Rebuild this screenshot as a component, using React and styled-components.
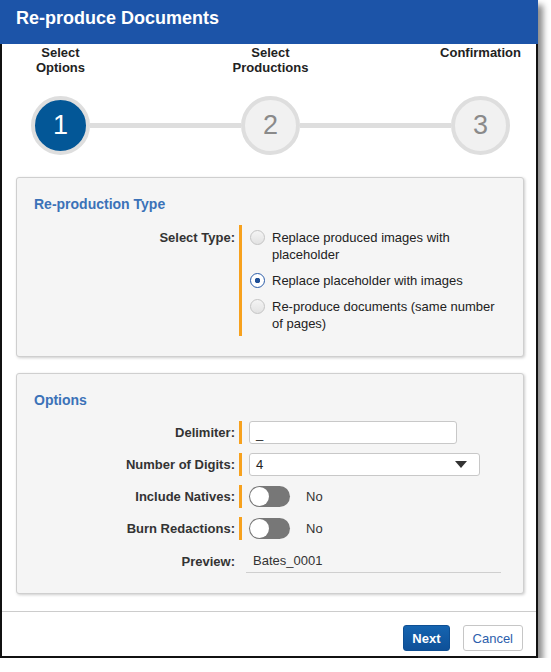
import React from "react";
import styled, { createGlobalStyle } from "styled-components";

const GlobalStyle = createGlobalStyle`
  body {
    margin: 0;
    background: #ffffff;
    font-family: "Liberation Sans", Arial, sans-serif;
  }
`;

const steps = [
  { num: 1, label: ["Select", "Options"], active: true },
  { num: 2, label: ["Select", "Productions"] },
  { num: 3, label: ["Confirmation"] },
];

const radios = [
  { text: "Replace produced images with placeholder" },
  { text: "Replace placeholder with images", checked: true },
  { text: "Re-produce documents (same number of pages)" },
];

const App = () => {
  return (
    <>
      <GlobalStyle />
      <Dialog>
        <Header>Re-produce Documents</Header>

        {/* wizard steps */}
        <Steps>
          {steps.map((s) => (
            <StepLabel key={"l" + s.num} $col={s.num * 2 - 1}>
              {s.label.map((line) => (
                <div key={line}>{line}</div>
              ))}
            </StepLabel>
          ))}
          {steps.map((s, i) => (
            <React.Fragment key={"c" + s.num}>
              <Circle $col={s.num * 2 - 1} $active={s.active}>
                {s.num}
              </Circle>
              {i < steps.length - 1 && <Connector $col={s.num * 2} />}
            </React.Fragment>
          ))}
        </Steps>

        <Body>
          <Card>
            <CardTitle>Re-production Type</CardTitle>
            <FieldRow>
              <Label $top>Select Type:</Label>
              <RadioGroup>
                {radios.map((r) => (
                  <RadioOption key={r.text}>
                    <RadioDot $checked={r.checked} />
                    <RadioText>{r.text}</RadioText>
                  </RadioOption>
                ))}
              </RadioGroup>
            </FieldRow>
          </Card>

          <Card>
            <CardTitle>Options</CardTitle>
            <Rows>
              <FieldRow>
                <Label>Delimiter:</Label>
                <Control $required>
                  <TextInput $w={208}>_</TextInput>
                </Control>
              </FieldRow>
              <FieldRow>
                <Label>Number of Digits:</Label>
                <Control $required>
                  <SelectBox $w={231}>
                    4
                    <svg width="12" height="7" viewBox="0 0 12 7">
                      <path d="M0 0 L12 0 L6 7 Z" fill="#333" />
                    </svg>
                  </SelectBox>
                </Control>
              </FieldRow>
              <FieldRow>
                <Label>Include Natives:</Label>
                <Control $required>
                  <Toggle />
                  <ToggleText>No</ToggleText>
                </Control>
              </FieldRow>
              <FieldRow>
                <Label>Burn Redactions:</Label>
                <Control $required>
                  <Toggle />
                  <ToggleText>No</ToggleText>
                </Control>
              </FieldRow>
              <FieldRow>
                <Label>Preview:</Label>
                <Control>
                  <Preview>Bates_0001</Preview>
                </Control>
              </FieldRow>
            </Rows>
          </Card>
        </Body>

        <Footer>
          <PrimaryButton>Next</PrimaryButton>
          <SecondaryButton>Cancel</SecondaryButton>
        </Footer>
      </Dialog>
    </>
  );
};

export default App;

const Dialog = styled.div`
  width: 538px;
  height: 658px;
  box-sizing: border-box;
  border: 2px solid #111;
  border-top: none;
  background: #fff;
  box-shadow: 5px 5px 6px rgba(0, 0, 0, 0.45);
  display: flex;
  flex-direction: column;
`;

const Header = styled.div`
  height: 45px;
  margin: 0 -2px;
  padding: 0 16px;
  background-color: #1c54a8;
  color: #fff;
  font-size: 18px;
  font-weight: bold;
  line-height: 36px;
`;

const Steps = styled.div`
  display: grid;
  grid-template-columns: 59px 1fr 59px 1fr 59px;
  grid-template-rows: 52px 59px;
  padding: 0 26px 0 29px;
  align-items: center;
`;

const StepLabel = styled.div`
  grid-column: ${(p) => p.$col};
  grid-row: 1;
  align-self: start;
  justify-self: center;
  white-space: nowrap;
  text-align: center;
  font-size: 13px;
  font-weight: bold;
  line-height: 15px;
  color: #222;
  padding-top: 1px;
`;

const Circle = styled.div`
  grid-column: ${(p) => p.$col};
  grid-row: 2;
  width: 59px;
  height: 59px;
  box-sizing: border-box;
  border-radius: 50%;
  border: 4px solid #dedede;
  background-color: ${(p) => (p.$active ? "#035797" : "#f1f1f1")};
  color: ${(p) => (p.$active ? "#fff" : "#8a8a8a")};
  display: flex;
  align-items: center;
  justify-content: center;
  font-size: 27px;
`;

const Connector = styled.div`
  grid-column: ${(p) => p.$col};
  grid-row: 2;
  height: 5px;
  background-color: #dedede;
`;

const Body = styled.div`
  flex: 1;
  display: flex;
  flex-direction: column;
  gap: 16px;
  padding: 22px 12px 0 14px;
`;

const Card = styled.div`
  background-color: #f5f5f5;
  border: 1px solid #cfcfcf;
  border-radius: 3px;
  box-shadow: 1px 1px 3px rgba(0, 0, 0, 0.2);
  padding: 18px 17px 20px 17px;
`;

const CardTitle = styled.div`
  color: #3b72b8;
  font-size: 14px;
  font-weight: bold;
  line-height: 16px;
  margin-bottom: 13px;
`;

const Rows = styled.div`
  display: flex;
  flex-direction: column;
  gap: 9px;
`;

const FieldRow = styled.div`
  display: flex;
  align-items: stretch;
`;

const Label = styled.div`
  width: 201px;
  margin-right: 4px;
  text-align: right;
  font-size: 13px;
  font-weight: bold;
  color: #333;
  line-height: 17px;
  display: flex;
  justify-content: flex-end;
  align-items: ${(p) => (p.$top ? "flex-start" : "center")};
  padding-top: ${(p) => (p.$top ? "4px" : "0")};
`;

const Control = styled.div`
  display: flex;
  align-items: center;
  min-height: 23px;
  border-left: 3px solid ${(p) => (p.$required ? "#f7a11d" : "transparent")};
  padding-left: 7px;
`;

const RadioGroup = styled.div`
  display: flex;
  flex-direction: column;
  gap: 9px;
  padding: 4px 0 4px 8px;
  border-left: 3px solid #f7a11d;
`;

const RadioOption = styled.div`
  display: flex;
  align-items: flex-start;
  gap: 7px;
  width: 254px;
`;

const RadioDot = styled.span`
  flex: none;
  width: 15px;
  height: 15px;
  margin-top: 1px;
  box-sizing: border-box;
  border-radius: 50%;
  border: 1px solid ${(p) => (p.$checked ? "#2a5ca8" : "#c4c4c4")};
  background: ${(p) =>
    p.$checked
      ? "radial-gradient(circle, #1f4f96 0 2.5px, #fff 3px)"
      : "linear-gradient(#f4f4f4, #e2e2e2)"};
`;

const RadioText = styled.span`
  font-size: 13px;
  line-height: 17px;
  color: #222;
`;

const TextInput = styled.div`
  width: ${(p) => p.$w}px;
  height: 23px;
  box-sizing: border-box;
  border: 1px solid #c8c8c8;
  border-radius: 3px;
  background: #fff;
  padding: 0 6px;
  font-size: 13px;
  line-height: 23px;
  color: #222;
`;

const SelectBox = styled(TextInput)`
  display: flex;
  align-items: center;
  justify-content: space-between;
  padding-right: 12px;
  line-height: normal;
`;

const Toggle = styled.span`
  position: relative;
  width: 41px;
  height: 21px;
  border-radius: 11px;
  background-color: #777;
  &::after {
    content: "";
    position: absolute;
    left: 1px;
    top: 1px;
    width: 19px;
    height: 19px;
    border-radius: 50%;
    background: #fff;
  }
`;

const ToggleText = styled.span`
  margin-left: 16px;
  font-size: 13px;
  color: #333;
`;

const Preview = styled.div`
  width: 255px;
  margin-left: -3px;
  padding: 0 0 4px 7px;
  box-sizing: border-box;
  border-bottom: 1px solid #cfcfcf;
  font-size: 13px;
  color: #333;
  margin-top: 4px;
`;

const Footer = styled.div`
  border-top: 1px solid #cccccc;
  display: flex;
  justify-content: flex-end;
  gap: 13px;
  padding: 13px 13px 0 0;
  height: 45px;
  box-sizing: border-box;
  margin-top: 17px;
`;

const PrimaryButton = styled.button`
  height: 26px;
  padding: 0 8px;
  border: 1px solid #0e4f93;
  border-radius: 3px;
  background: linear-gradient(#1564b0, #0e5098);
  color: #fff;
  font-family: "Liberation Sans", Arial, sans-serif;
  font-size: 13px;
  font-weight: bold;
`;

const SecondaryButton = styled.button`
  height: 26px;
  padding: 0 9px;
  border: 1px solid #c6c6c6;
  border-radius: 3px;
  background: #fff;
  color: #2c5eac;
  font-family: "Liberation Sans", Arial, sans-serif;
  font-size: 13px;
`;
